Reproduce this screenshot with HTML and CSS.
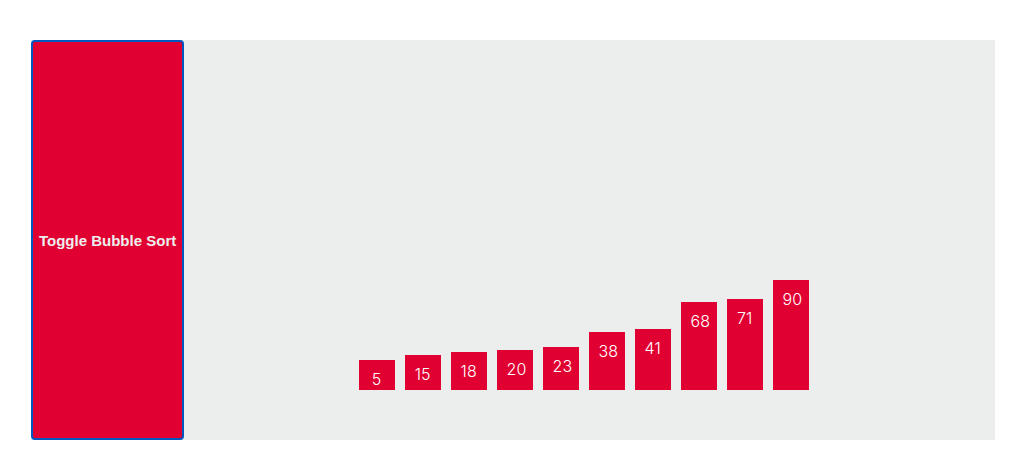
FILE: index.html
```html
<!DOCTYPE html>
<html lang="en">
<head>
<meta charset="utf-8">
<title>Bubble Sort</title>
<link rel="stylesheet" href="styles.css">
</head>
<body>
<main class="visualizer">
  <button class="toggle" type="button">Toggle Bubble Sort</button>
  <div class="bars">
    <div class="bar" style="height:30px">5</div>
    <div class="bar" style="height:35px">15</div>
    <div class="bar" style="height:38px">18</div>
    <div class="bar" style="height:40px">20</div>
    <div class="bar" style="height:43px">23</div>
    <div class="bar" style="height:58px">38</div>
    <div class="bar" style="height:61px">41</div>
    <div class="bar" style="height:88px">68</div>
    <div class="bar" style="height:91px">71</div>
    <div class="bar" style="height:110px">90</div>
  </div>
</main>
</body>
</html>
```

FILE: styles.css
```css
* {
  box-sizing: border-box;
}

body {
  margin: 0;
  padding: 40px 23px 36px 31px;
  background: #fff;
  font-family: Inter, "Liberation Sans", sans-serif;
}

.visualizer {
  display: flex;
  min-height: 400px;
  background: #eceeed;
}

.toggle {
  padding: 0 6px;
  border: 2px solid #0056c0;
  border-radius: 4px;
  background: #e10032;
  color: #eceeed;
  font: bold 15px "Liberation Sans", Arial, sans-serif;
  white-space: nowrap;
}

.bars {
  display: flex;
  flex: 1;
  align-items: flex-end;
  justify-content: center;
  gap: 10px;
  padding: 0 12px 50px 0;
}

.bar {
  width: 36px;
  padding: 10px 10px 0;
  background: #e10032;
  color: #fff;
  font-size: 16px;
  font-weight: 300;
  line-height: 18px;
  text-align: center;
}
```
